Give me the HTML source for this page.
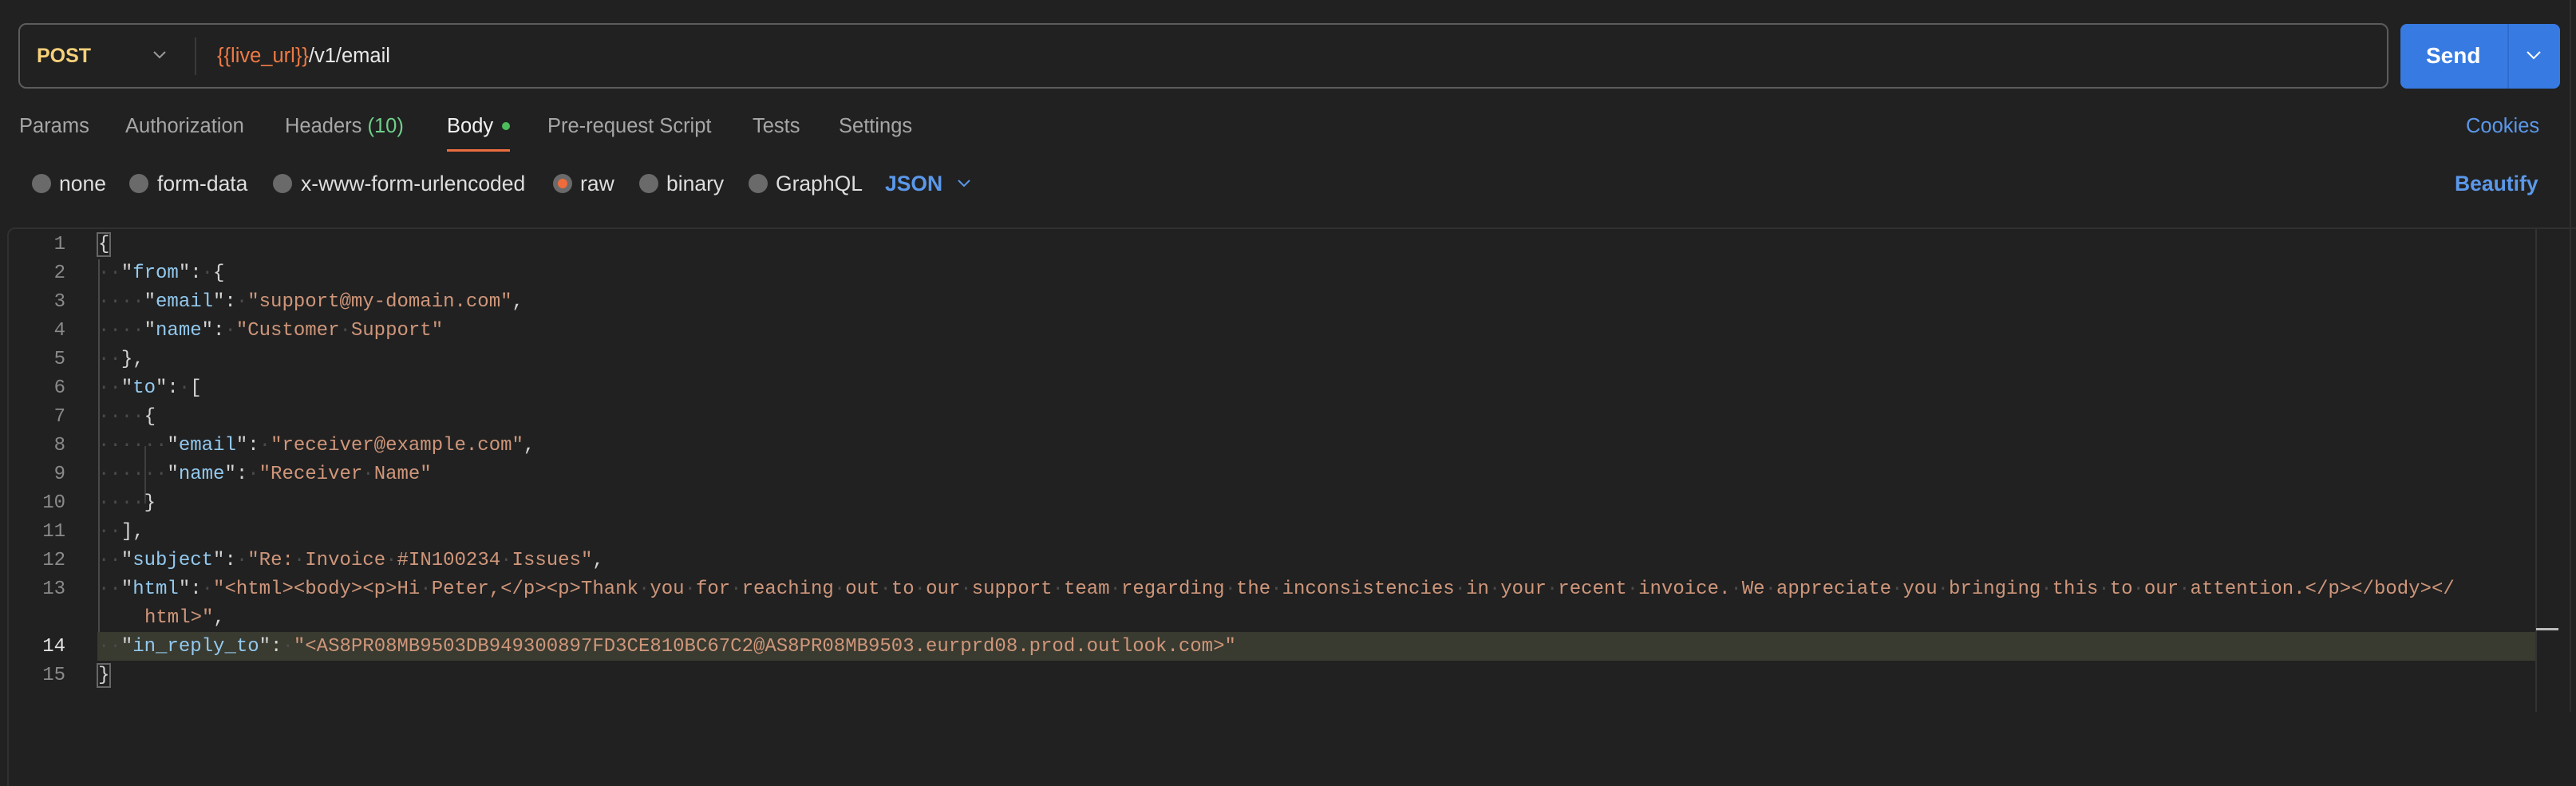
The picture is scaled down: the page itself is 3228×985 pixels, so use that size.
<!DOCTYPE html>
<html><head><meta charset="utf-8"><style>
*{margin:0;padding:0;box-sizing:border-box}
body{width:3228px;height:892px;background:#212121;position:relative;overflow:hidden;font-family:"Liberation Sans",sans-serif;color:#a6a6a6}
.a{position:absolute;white-space:pre}
.ui{font-size:25.5px;line-height:30px}
.ui2{font-size:26.5px;line-height:30px}
.rad{position:absolute;width:24px;height:24px;border-radius:50%;background:#6a6a6a;top:218px}
.code{font-family:"Liberation Mono",monospace;font-size:24px;line-height:36px;color:#d4d4d4}
.k{color:#93c9ee}.s{color:#cf967a}.d{color:#4a4a4a}
.ln{position:absolute;width:60px;text-align:right;left:22px;font-family:"Liberation Mono",monospace;font-size:24px;line-height:36px;color:#8a8a8a}
</style></head><body>
<div class="a" style="left:23px;top:29px;width:2970px;height:82px;border:2px solid #5c5c5c;border-radius:10px"></div>
<div class="a ui" style="left:46px;top:55px;color:#f6d17a;font-weight:bold;font-size:25px">POST</div>
<svg class="a" style="left:190px;top:62px" width="20" height="14"><path d="M3 3 L10 10 L17 3" stroke="#9a9a9a" stroke-width="2" fill="none"/></svg>
<div class="a" style="left:244px;top:47px;width:2px;height:47px;background:#3a3a3a"></div>
<div class="a ui" style="left:272px;top:55px;color:#e8e8e8"><span style="color:#ee7a45">{{live_url}}</span>/v1/email</div>
<div class="a" style="left:3008px;top:30px;width:200px;height:81px;background:#377ae2;border-radius:8px"></div>
<div class="a" style="left:3142px;top:30px;width:2px;height:81px;background:#2f6cd0"></div>
<div class="a" style="left:3040px;top:52px;color:#fff;font-weight:bold;font-size:28px;line-height:36px">Send</div>
<svg class="a" style="left:3164px;top:62px" width="22" height="14"><path d="M3 3 L11 11 L19 3" stroke="#fff" stroke-width="2" fill="none"/></svg>
<div class="a ui" style="left:24px;top:143px">Params</div>
<div class="a ui" style="left:157px;top:143px">Authorization</div>
<div class="a ui" style="left:357px;top:143px">Headers <span style="color:#6fcf8a">(10)</span></div>
<div class="a ui" style="left:560px;top:143px;color:#f2f2f2">Body</div>
<div class="a" style="left:629px;top:153px;width:10px;height:10px;border-radius:50%;background:#4cbb5c"></div>
<div class="a" style="left:560px;top:187px;width:79px;height:3px;background:#ec6d3f"></div>
<div class="a ui" style="left:686px;top:143px">Pre-request Script</div>
<div class="a ui" style="left:943px;top:143px">Tests</div>
<div class="a ui" style="left:1051px;top:143px">Settings</div>
<div class="a ui" style="left:3090px;top:143px;color:#5b98ea">Cookies</div>
<div class="rad" style="left:40px"></div><div class="a ui2" style="left:74px;top:215px;color:#dedede">none</div>
<div class="rad" style="left:162px"></div><div class="a ui2" style="left:197px;top:215px;color:#dedede">form-data</div>
<div class="rad" style="left:342px"></div><div class="a ui2" style="left:377px;top:215px;color:#dedede">x-www-form-urlencoded</div>
<div class="rad" style="left:693px"></div><div class="a" style="left:699px;top:224px;width:12px;height:12px;border-radius:50%;background:#ee6b3c"></div><div class="a ui2" style="left:727px;top:215px;color:#dedede">raw</div>
<div class="rad" style="left:801px"></div><div class="a ui2" style="left:835px;top:215px;color:#dedede">binary</div>
<div class="rad" style="left:938px"></div><div class="a ui2" style="left:972px;top:215px;color:#dedede">GraphQL</div>
<div class="a ui2" style="left:1109px;top:215px;color:#5b98ea;font-weight:bold">JSON</div>
<svg class="a" style="left:1198px;top:223px" width="20" height="14"><path d="M3 3 L10 10 L17 3" stroke="#5b98ea" stroke-width="2" fill="none"/></svg>
<div class="a ui2" style="left:3076px;top:215px;color:#5b98ea;font-weight:bold">Beautify</div>
<div class="a" style="left:9px;top:285px;width:3300px;height:700px;border-top:2px solid #303030;border-left:2px solid #303030;border-radius:10px 0 0 0"></div>
<div class="a" style="left:3177px;top:287px;width:2px;height:605px;background:#333"></div>
<div class="a" style="left:3178px;top:787px;width:28px;height:3px;background:#bbb"></div>
<div class="a" style="left:3220px;top:0;width:2px;height:892px;background:#2e2e2e"></div>
<div class="a" style="left:122px;top:792px;width:3055px;height:36px;background:#393a30"></div>
<div class="a" style="left:123px;top:325px;width:2px;height:467px;background:#4a4a4a"></div>
<div class="a" style="left:181px;top:559px;width:2px;height:72px;background:#3e3e3e"></div>
<div class="ln" style="top:289px">1</div><div class="ln" style="top:325px">2</div><div class="ln" style="top:361px">3</div><div class="ln" style="top:397px">4</div><div class="ln" style="top:433px">5</div><div class="ln" style="top:469px">6</div><div class="ln" style="top:505px">7</div><div class="ln" style="top:541px">8</div><div class="ln" style="top:577px">9</div><div class="ln" style="top:613px">10</div><div class="ln" style="top:649px">11</div><div class="ln" style="top:685px">12</div><div class="ln" style="top:721px">13</div><div class="ln" style="top:793px;color:#e6e6e6">14</div><div class="ln" style="top:829px">15</div>
<div class="a code" style="left:123px;top:289px"><span style="outline:2px solid #666">{</span></div>
<div class="a code" style="left:123px;top:325px"><span class="d">··</span>"<span class="k">from</span>":<span class="d">·</span>{</div>
<div class="a code" style="left:123px;top:361px"><span class="d">····</span>"<span class="k">email</span>":<span class="d">·</span><span class="s">"support@my-domain.com"</span>,</div>
<div class="a code" style="left:123px;top:397px"><span class="d">····</span>"<span class="k">name</span>":<span class="d">·</span><span class="s">"Customer<span class="d">·</span>Support"</span></div>
<div class="a code" style="left:123px;top:433px"><span class="d">··</span>},</div>
<div class="a code" style="left:123px;top:469px"><span class="d">··</span>"<span class="k">to</span>":<span class="d">·</span>[</div>
<div class="a code" style="left:123px;top:505px"><span class="d">····</span>{</div>
<div class="a code" style="left:123px;top:541px"><span class="d">······</span>"<span class="k">email</span>":<span class="d">·</span><span class="s">"receiver@example.com"</span>,</div>
<div class="a code" style="left:123px;top:577px"><span class="d">······</span>"<span class="k">name</span>":<span class="d">·</span><span class="s">"Receiver<span class="d">·</span>Name"</span></div>
<div class="a code" style="left:123px;top:613px"><span class="d">····</span>}</div>
<div class="a code" style="left:123px;top:649px"><span class="d">··</span>],</div>
<div class="a code" style="left:123px;top:685px"><span class="d">··</span>"<span class="k">subject</span>":<span class="d">·</span><span class="s">"Re:<span class="d">·</span>Invoice<span class="d">·</span>#IN100234<span class="d">·</span>Issues"</span>,</div>
<div class="a code" style="left:123px;top:721px"><span class="d">··</span>"<span class="k">html</span>":<span class="d">·</span><span class="s">"&lt;html&gt;&lt;body&gt;&lt;p&gt;Hi<span class="d">·</span>Peter,&lt;/p&gt;&lt;p&gt;Thank<span class="d">·</span>you<span class="d">·</span>for<span class="d">·</span>reaching<span class="d">·</span>out<span class="d">·</span>to<span class="d">·</span>our<span class="d">·</span>support<span class="d">·</span>team<span class="d">·</span>regarding<span class="d">·</span>the<span class="d">·</span>inconsistencies<span class="d">·</span>in<span class="d">·</span>your<span class="d">·</span>recent<span class="d">·</span>invoice.<span class="d">·</span>We<span class="d">·</span>appreciate<span class="d">·</span>you<span class="d">·</span>bringing<span class="d">·</span>this<span class="d">·</span>to<span class="d">·</span>our<span class="d">·</span>attention.&lt;/p&gt;&lt;/body&gt;&lt;/</span></div>
<div class="a code" style="left:181px;top:757px"><span class="s">html&gt;"</span>,</div>
<div class="a code" style="left:123px;top:793px"><span class="d">··</span>"<span class="k">in_reply_to</span>":<span class="d">·</span><span class="s">"&lt;AS8PR08MB9503DB949300897FD3CE810BC67C2@AS8PR08MB9503.eurprd08.prod.outlook.com&gt;"</span></div>
<div class="a code" style="left:123px;top:829px"><span style="outline:2px solid #666">}</span></div>
</body></html>
